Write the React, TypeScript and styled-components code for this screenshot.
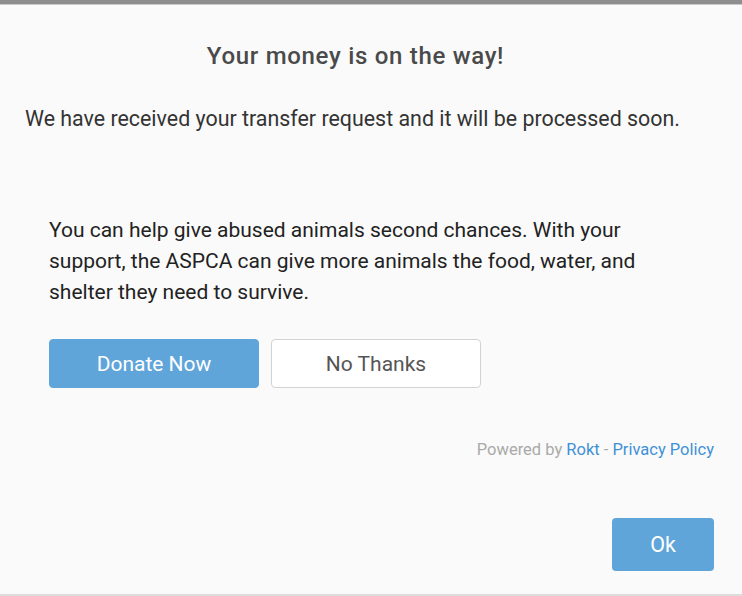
import React from "react";
import styled, { createGlobalStyle } from "styled-components";

const Global = createGlobalStyle`
  html, body { margin: 0; padding: 0; background: #fafafa; }
  body { font-family: Roboto, "Noto Sans", Arial, sans-serif; }
`;

const Page = styled.div`
  width: 742px;
  height: 596px;
  box-sizing: border-box;
  background: #fafafa;
  border-top: 4px solid #8e8e8e;
  border-bottom: 2px solid #dcdcdc;
  display: flex;
  flex-direction: column;
`;

const TopLine = styled.div`
  height: 1px;
  background: #c9c9c9;
`;

const Title = styled.h1`
  margin: 37px 31px 0 0;
  text-align: center;
  font-size: 24px;
  font-weight: 500;
  color: #4a4a4a;
  letter-spacing: 0.7px;
  line-height: 28px;
`;

const Lead = styled.p`
  margin: 35px 0 0 25px;
  font-size: 21.4px;
  line-height: 28px;
  color: #333;
`;

const Offer = styled.section`
  margin: 82px 0 0 49px;
  width: 600px;
`;

const OfferText = styled.p`
  margin: 0;
  font-size: 21px;
  line-height: 31px;
  color: #222;
`;

const Buttons = styled.div`
  display: flex;
  gap: 12px;
  margin-top: 31px;
`;

const Btn = styled.button<{ $primary?: boolean }>`
  width: 210px;
  height: 49px;
  box-sizing: border-box;
  border-radius: 4px;
  font-family: inherit;
  font-size: 21px;
  cursor: pointer;
  background: ${(p) => (p.$primary ? "#5fa5da" : "#ffffff")};
  color: ${(p) => (p.$primary ? "#ffffff" : "#555")};
  border: 1px solid ${(p) => (p.$primary ? "#5fa5da" : "#d3d3d3")};
`;

const Powered = styled.div`
  margin: 52px 28px 0 0;
  text-align: right;
  font-size: 16.5px;
  color: #a9a9a9;
`;

const Link = styled.a`
  color: #3f91d6;
  text-decoration: none;
`;

const Footer = styled.div`
  margin-top: auto;
  padding: 0 28px 23px 0;
  display: flex;
  justify-content: flex-end;
`;

const OkBtn = styled.button`
  width: 102px;
  height: 53px;
  border: none;
  border-radius: 4px;
  background: #5fa5da;
  color: #fff;
  font-family: inherit;
  font-size: 21.5px;
  cursor: pointer;
`;

export default function App() {
  return (
    <>
      <Global />
      <Page>
        <TopLine />
        <Title>Your money is on the way!</Title>
        <Lead>We have received your transfer request and it will be processed soon.</Lead>
        <Offer>
          <OfferText>
            You can help give abused animals second chances. With your support, the ASPCA can give more animals the food, water, and shelter they need to survive.
          </OfferText>
          <Buttons>
            <Btn $primary>Donate Now</Btn>
            <Btn>No Thanks</Btn>
          </Buttons>
        </Offer>
        <Powered>
          Powered by <Link href="#">Rokt</Link> - <Link href="#">Privacy Policy</Link>
        </Powered>
        <Footer>
          <OkBtn>Ok</OkBtn>
        </Footer>
      </Page>
    </>
  );
}
